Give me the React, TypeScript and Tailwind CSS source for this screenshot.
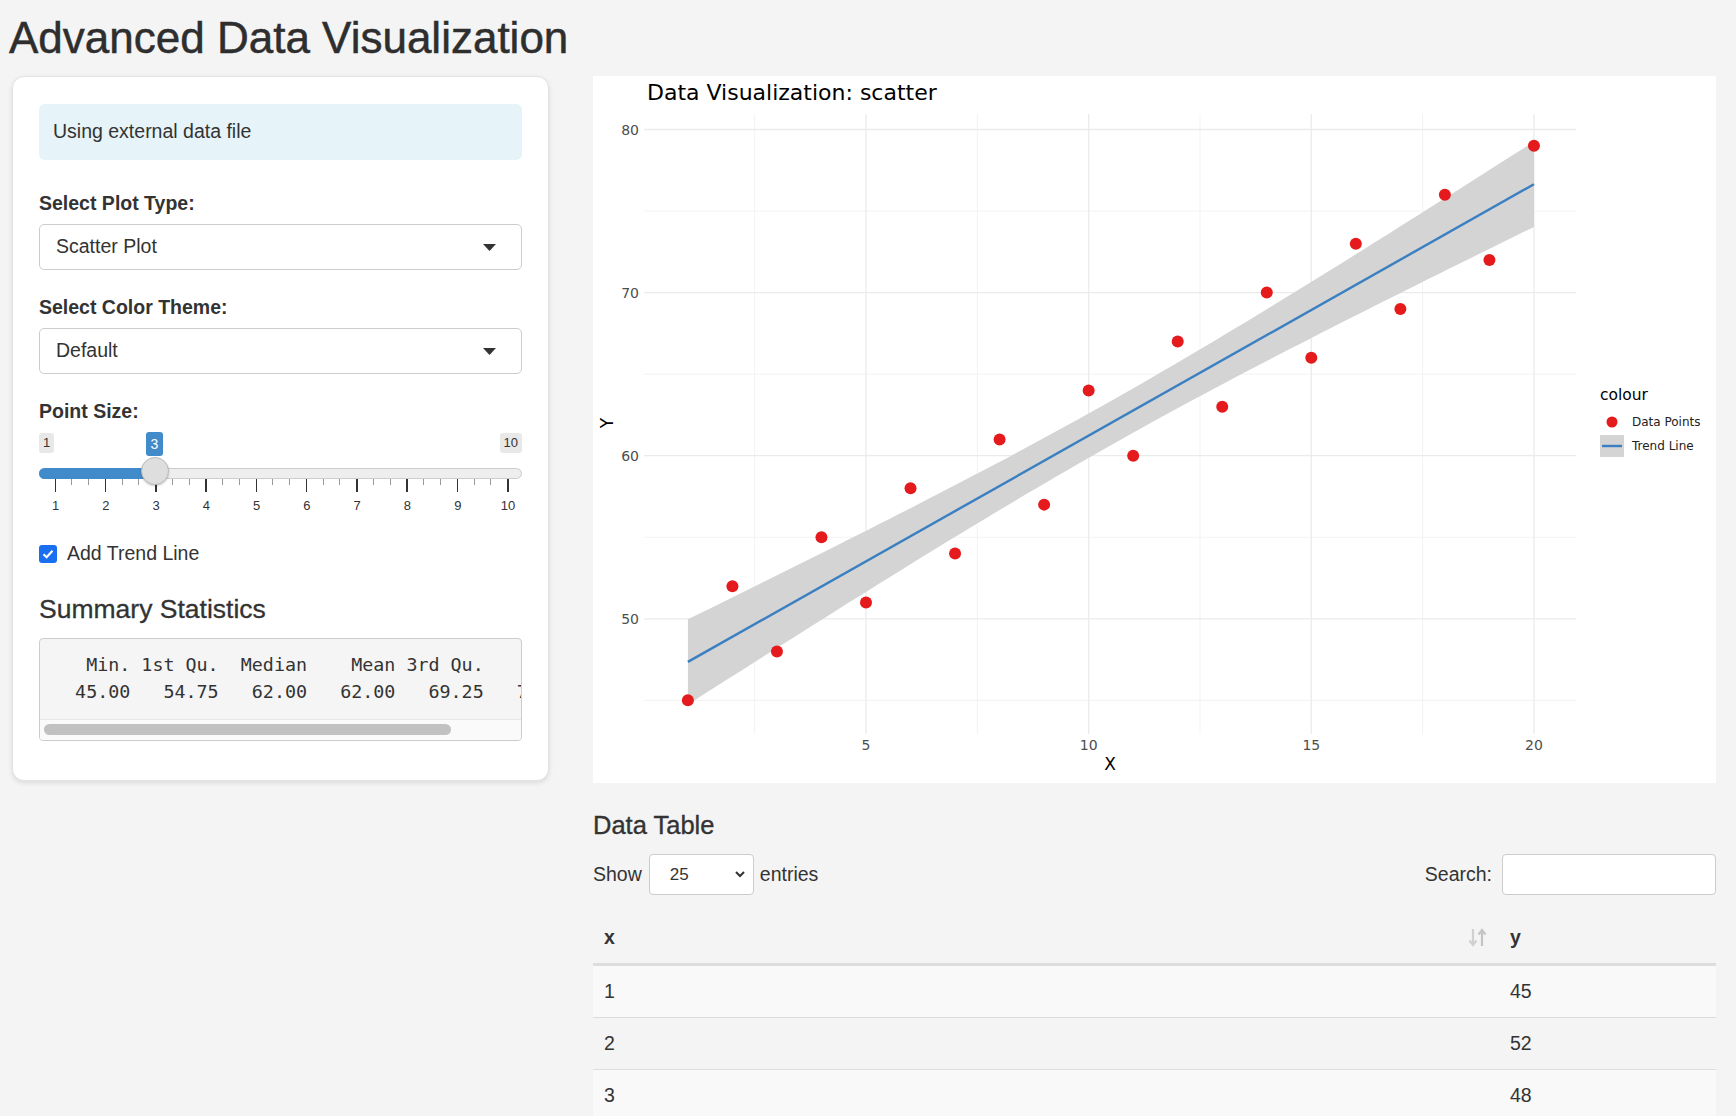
import React from "react";

const points: [number, number][] = [
  [1, 45], [2, 52], [3, 48], [4, 55], [5, 51], [6, 58], [7, 54], [8, 61], [9, 57], [10, 64],
  [11, 60], [12, 67], [13, 63], [14, 70], [15, 66], [16, 73], [17, 69], [18, 76], [19, 72], [20, 79],
];

const summary = [
  "   Min. 1st Qu.  Median    Mean 3rd Qu.    Max. ",
  "  45.00   54.75   62.00   62.00   69.25   79.00 ",
];

// plot scales, in px inside the white plot box
const sx = (v: number) => 273 + (v - 5) * 44.53;
const sy = (v: number) => 53.5 + (80 - v) * 16.31;
const L = 51;
const T = 38;
const R = 983;
const B = 658;

function fitLine() {
  const n = points.length;
  const xbar = points.reduce((s, p) => s + p[0], 0) / n;
  const ybar = points.reduce((s, p) => s + p[1], 0) / n;
  const sxx = points.reduce((s, p) => s + (p[0] - xbar) ** 2, 0);
  const sxy = points.reduce((s, p) => s + (p[0] - xbar) * (p[1] - ybar), 0);
  const b = sxy / sxx;
  const a = ybar - b * xbar;
  const sse = points.reduce((s, p) => s + (p[1] - a - b * p[0]) ** 2, 0);
  const se = Math.sqrt(sse / (n - 2));
  const half = (x: number) => 2.1009 * se * Math.sqrt(1 / n + (x - xbar) ** 2 / sxx);
  const xs = Array.from({ length: 81 }, (_, i) => 1 + (19 * i) / 80);
  const upper = xs.map((x) => `${sx(x).toFixed(1)},${sy(a + b * x + half(x)).toFixed(1)}`);
  const lower = [...xs].reverse().map((x) => `${sx(x).toFixed(1)},${sy(a + b * x - half(x)).toFixed(1)}`);
  return {
    ribbon: [...upper, ...lower].join(" "),
    line: { x1: sx(1), y1: sy(a + b), x2: sx(20), y2: sy(a + b * 20) },
  };
}

function ScatterPlot() {
  const fit = fitLine();
  const font = "'DejaVu Sans', Verdana, sans-serif";
  return (
    <svg width="1123" height="707" viewBox="0 0 1123 707" style={{ fontFamily: font }}>
      <rect x="0" y="0" width="1123" height="707" fill="#ffffff" />
      <text x="54" y="24" fontSize="22" fill="#000">Data Visualization: scatter</text>

      {/* minor grid */}
      {[2.5, 7.5, 12.5, 17.5].map((v) => (
        <line key={"mx" + v} x1={sx(v)} x2={sx(v)} y1={T} y2={B} stroke="#f3f3f3" strokeWidth="1" />
      ))}
      {[45, 55, 65, 75].map((v) => (
        <line key={"my" + v} x1={L} x2={R} y1={sy(v)} y2={sy(v)} stroke="#f3f3f3" strokeWidth="1" />
      ))}
      {/* major grid */}
      {[5, 10, 15, 20].map((v) => (
        <line key={"gx" + v} x1={sx(v)} x2={sx(v)} y1={T} y2={B} stroke="#ebebeb" strokeWidth="1.3" />
      ))}
      {[50, 60, 70, 80].map((v) => (
        <line key={"gy" + v} x1={L} x2={R} y1={sy(v)} y2={sy(v)} stroke="#ebebeb" strokeWidth="1.3" />
      ))}

      <polygon points={fit.ribbon} fill="#d4d4d4" />
      <line {...fit.line} stroke="#3a7fc1" strokeWidth="2.4" />

      {points.map(([x, y]) => (
        <circle key={x} cx={sx(x)} cy={sy(y)} r="6" fill="#e41a1c" />
      ))}

      {[50, 60, 70, 80].map((v) => (
        <text key={"ty" + v} x="46" y={sy(v) + 5} fontSize="14" fill="#4d4d4d" textAnchor="end">
          {v}
        </text>
      ))}
      {[5, 10, 15, 20].map((v) => (
        <text key={"tx" + v} x={sx(v)} y="674" fontSize="14" fill="#4d4d4d" textAnchor="middle">
          {v}
        </text>
      ))}
      <text x="517" y="694" fontSize="17" fill="#000" textAnchor="middle">X</text>
      <text x="14" y="347" fontSize="17" fill="#000" textAnchor="middle" dominantBaseline="central" transform="rotate(-90 14 347)">
        Y
      </text>

      {/* legend */}
      <text x="1007" y="324" fontSize="15.5" fill="#000">colour</text>
      <circle cx="1019" cy="346" r="5.5" fill="#e41a1c" />
      <text x="1039" y="350" fontSize="12" fill="#222">Data Points</text>
      <rect x="1007" y="359" width="24" height="22" fill="#d4d4d4" />
      <line x1="1009" x2="1029" y1="370" y2="370" stroke="#3a7fc1" strokeWidth="2.4" />
      <text x="1039" y="374" fontSize="12" fill="#222">Trend Line</text>
    </svg>
  );
}

function Caret() {
  return (
    <svg width="13" height="7" viewBox="0 0 13 7">
      <path d="M0 0 L13 0 L6.5 7 Z" fill="#333" />
    </svg>
  );
}

function SelectBox({ value }: { value: string }) {
  return (
    <div className="mt-[7px] flex h-[46px] items-center justify-between rounded-[5px] border border-[#cccccc] bg-white pr-[25px] pl-[16px]">
      <span>{value}</span>
      <Caret />
    </div>
  );
}

function PointSlider() {
  const step = 50.27;
  const pos = (v: number) => 15.6 + (v - 1) * step;
  const values = [1, 2, 3, 4, 5, 6, 7, 8, 9, 10];
  return (
    <div className="relative h-[88px]">
      <span className="absolute top-[8px] left-0 h-[20px] rounded-[3px] bg-[#e8e8e8] px-[4px] text-[13px] leading-[20px]">1</span>
      <span className="absolute top-[8px] right-0 h-[20px] rounded-[3px] bg-[#e8e8e8] px-[4px] text-[13px] leading-[20px]">10</span>
      <span className="absolute top-[7px] left-[107px] h-[24px] w-[17px] rounded-[3px] bg-[#428bca] text-center text-[14px] leading-[24px] text-white">
        3
      </span>
      <div className="absolute top-[43px] right-0 left-0 h-[11px] rounded-full border border-[#cccccc] bg-[#eeeeee]" />
      <div className="absolute top-[43px] left-0 h-[11px] w-[116px] rounded-l-full bg-[#428bca]" />
      {values.map((v) => (
        <React.Fragment key={v}>
          <div className="absolute top-[54px] h-[13px] w-[1.5px] bg-[#333]" style={{ left: pos(v) }} />
          {v < 10 && (
            <>
              <div className="absolute top-[54px] h-[6px] w-px bg-[#999]" style={{ left: pos(v) + step / 3 }} />
              <div className="absolute top-[54px] h-[6px] w-px bg-[#999]" style={{ left: pos(v) + (2 * step) / 3 }} />
            </>
          )}
          <span
            className="absolute top-[73px] -translate-x-1/2 text-[13px] leading-[16px] text-[#333]"
            style={{ left: pos(v) + 1 }}
          >
            {v}
          </span>
        </React.Fragment>
      ))}
      <div className="absolute top-[32px] left-[102px] size-[28px] rounded-full border border-[#bbbbbb] bg-[#dedede] shadow-[0_1px_2px_rgba(0,0,0,0.2)]" />
    </div>
  );
}

function Sidebar() {
  return (
    <div className="rounded-[12px] border border-[#e2e2e2] bg-white px-[26px] pt-[27px] pb-[39px] shadow-[0_2px_5px_rgba(0,0,0,0.1)]">
      <div className="flex h-[56px] items-center rounded-[6px] bg-[#e6f3f8] px-[14px]">Using external data file</div>

      <div className="mt-[29px] h-[28px] leading-[28px] font-bold">Select Plot Type:</div>
      <SelectBox value="Scatter Plot" />

      <div className="mt-[23px] h-[28px] leading-[28px] font-bold">Select Color Theme:</div>
      <SelectBox value="Default" />

      <div className="mt-[23px] h-[28px] leading-[28px] font-bold">Point Size:</div>
      <PointSlider />

      <div className="mt-[27px] flex h-[28px] items-center gap-[10px]">
        <span className="flex size-[18px] items-center justify-center rounded-[3px] bg-[#1a6ff0]">
          <svg width="12" height="10" viewBox="0 0 12 10">
            <path d="M1.5 5.2 L4.6 8.2 L10.5 1.8" fill="none" stroke="#fff" strokeWidth="2.2" />
          </svg>
        </span>
        <span>Add Trend Line</span>
      </div>

      <h3 className="mt-[25px] text-[26.5px] leading-[32px] font-normal [-webkit-text-stroke:0.3px_#333]">Summary Statistics</h3>

      <div className="mt-[13px] overflow-hidden rounded-[4px] border border-[#cccccc] bg-[#f5f5f5]">
        <pre className="overflow-hidden pt-[12px] pb-[14px] pl-[13px] font-['DejaVu_Sans_Mono',monospace] text-[18.35px] leading-[27px] text-[#333]">
          {summary.join("\n")}
        </pre>
        <div className="h-[21px] border-t border-[#e6e6e6] bg-[#fafafa] px-[4px] pt-[4px]">
          <div className="h-[11px] w-[407px] rounded-full bg-[#c1c1c1]" />
        </div>
      </div>
    </div>
  );
}

function SortIcon() {
  return (
    <svg width="19" height="19" viewBox="0 0 19 19">
      <path d="M5 1 V16 M1.5 12.5 L5 17 L8.5 12.5" fill="none" stroke="#d0d0d0" strokeWidth="2.2" />
      <path d="M14 18 V3 M10.5 6.5 L14 2 L17.5 6.5" fill="none" stroke="#c4c4c4" strokeWidth="2.2" />
    </svg>
  );
}

function DataTable() {
  return (
    <div className="mt-[17px]">
      <div className="flex h-[54px] border-b-[3px] border-[#dddddd] font-bold">
        <div className="flex w-[907px] items-center justify-between pr-[13px] pl-[11px]">
          <span>x</span>
          <SortIcon />
        </div>
        <div className="flex flex-1 items-center pl-[10px]">y</div>
      </div>
      {points.map(([x, y], i) => (
        <div key={x} className={`flex h-[52px] border-b border-[#dddddd] ${i % 2 === 0 ? "bg-[#f9f9f9]" : ""}`}>
          <div className="flex w-[907px] items-center pl-[11px]">{x}</div>
          <div className="flex flex-1 items-center pl-[10px]">{y}</div>
        </div>
      ))}
    </div>
  );
}

function MainPanel() {
  return (
    <div>
      <div className="h-[707px] bg-white">
        <ScatterPlot />
      </div>

      <h3 className="mt-[27px] text-[25.5px] leading-[31px] font-normal [-webkit-text-stroke:0.35px_#333]">Data Table</h3>

      <div className="mt-[13px] flex h-[41px] items-center justify-between">
        <div className="flex items-center">
          <span>Show</span>
          <div className="ml-[7px] flex h-[41px] w-[105px] items-center justify-between rounded-[4px] border border-[#cccccc] bg-white pr-[8px] pl-[20px] text-[17px]">
            <span>25</span>
            <svg width="10" height="7" viewBox="0 0 10 7">
              <path d="M1 1 L5 5 L9 1" fill="none" stroke="#333" strokeWidth="2" />
            </svg>
          </div>
          <span className="ml-[6px]">entries</span>
        </div>
        <div className="flex items-center">
          <span>Search:</span>
          <div className="ml-[10px] h-[41px] w-[214px] rounded-[4px] border border-[#cccccc] bg-white" />
        </div>
      </div>

      <DataTable />
    </div>
  );
}

export default function App() {
  return (
    <div className="min-h-screen bg-[#f4f4f4] font-['Liberation_Sans',Arial,sans-serif] text-[19.5px] text-[#333]">
      <div className="pt-[12px] pl-[9px]">
        <h1 className="text-[44px] leading-[52px] font-normal text-[#2e2e2e] [-webkit-text-stroke:0.5px_#2e2e2e]">
          Advanced Data Visualization
        </h1>
      </div>
      <div className="mt-[12px] grid grid-cols-[537px_1123px] items-start gap-x-[44px] pl-[12px]">
        <Sidebar />
        <MainPanel />
      </div>
    </div>
  );
}
